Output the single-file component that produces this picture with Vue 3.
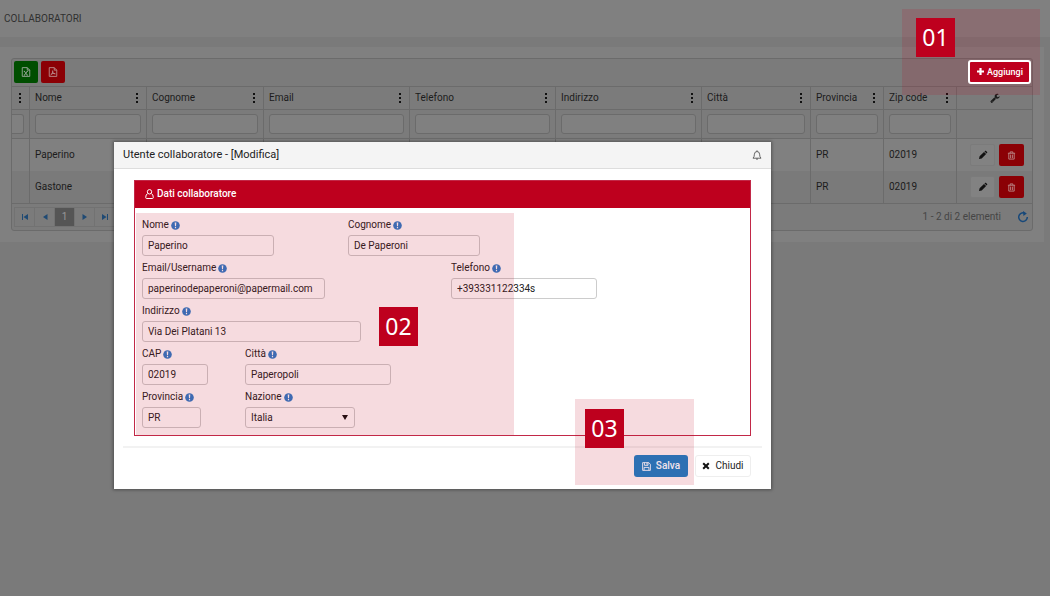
<script setup>
import { reactive } from 'vue'

const columns = [
  { key: 'nome', label: 'Nome', cls: 'w-name' },
  { key: 'cognome', label: 'Cognome', cls: 'w-name' },
  { key: 'email', label: 'Email', cls: 'w-wide' },
  { key: 'telefono', label: 'Telefono', cls: 'w-wide' },
  { key: 'indirizzo', label: 'Indirizzo', cls: 'w-wide' },
  { key: 'citta', label: 'Città', cls: 'w-city' },
  { key: 'provincia', label: 'Provincia', cls: 'w-short' },
  { key: 'zip', label: 'Zip code', cls: 'w-short' }
]
const rows = [
  { nome: 'Paperino', provincia: 'PR', zip: '02019' },
  { nome: 'Gastone', provincia: 'PR', zip: '02019' }
]
const fields = reactive([
  { id: 'nome', label: 'Nome', value: 'Paperino', col: 'c1', size: 's-name' },
  { id: 'cognome', label: 'Cognome', value: 'De Paperoni', col: 'c3', size: 's-name' },
  { id: 'email', label: 'Email/Username', value: 'paperinodepaperoni@papermail.com', col: 'c1', size: 's-email' },
  { id: 'telefono', label: 'Telefono', value: '+393331122334s', col: 'c4', size: 's-wide' },
  { id: 'indirizzo', label: 'Indirizzo', value: 'Via Dei Platani 13', col: 'c1 full', size: 's-address' },
  { id: 'cap', label: 'CAP', value: '02019', col: 'c1 one', size: 's-cap' },
  { id: 'citta', label: 'Città', value: 'Paperopoli', col: 'c2', size: 's-wide' },
  { id: 'provincia', label: 'Provincia', value: 'PR', col: 'c1 one', size: 's-prov' },
  { id: 'nazione', label: 'Nazione', value: 'Italia', col: 'c2', size: 's-country', select: true }
])
</script>

<template>
  <div class="page">
    <header class="top"><h1>COLLABORATORI</h1></header>
    <main class="panel">
      <section class="grid">
        <div class="toolbar">
          <button class="tool green" aria-label="Excel">
            <svg width="10" height="10" viewBox="0 0 16 16" fill="none" stroke="currentColor" stroke-width="1.4"><path d="M2 1h8l4 4v10H2zM10 1v4h4M5.500 7l4.500 6M10 7l-4.500 6M4.500 7h2M9 7h2M4.500 13h2M9 13h2" /></svg>
          </button>
          <button class="tool red" aria-label="PDF">
            <svg width="10" height="10" viewBox="0 0 16 16" fill="none" stroke="currentColor" stroke-width="1.4"><path d="M2 1h8l4 4v10H2zM10 1v4h4M4 13c2-1 4-4 3.500-7.500M7.500 7c.5 3 2 4 4.500 4M5 11.500c2-1 4-1.500 6-1" /></svg>
          </button>
          <button class="add">
            <svg width="9" height="9" viewBox="0 0 9 9" fill="currentColor"><path d="M3.400 1h2.200v2.400H8v2.200H5.600V8H3.400V5.600H1V3.400h2.400z" /></svg>
            Aggiungi
          </button>
        </div>
        <table>
          <thead>
            <tr class="heads">
              <th class="w-clip"><button class="dots" aria-label="Menu"><i></i><i></i><i></i></button></th>
              <th v-for="c in columns" :key="c.key" :class="c.cls">
                <div class="head"><span>{{ c.label }}</span><button class="dots" :aria-label="'Menu ' + c.label"><i></i><i></i><i></i></button></div>
              </th>
              <th class="w-tools">
                <svg width="10" height="10" viewBox="0 0 1792 1792" fill="currentColor"><path d="M448 1472q0-26-19-45t-45-19-45 19-19 45 19 45 45 19 45-19 19-45zm644-420l-682 682q-37 37-90 37-52 0-91-37l-106-108q-38-36-38-90 0-53 38-91l681-681q39 98 114.500 173.500t173.500 114.500zm634-435q0 39-23 106-47 134-164.500 217.500t-258.500 83.500q-185 0-316.500-131.500t-131.500-316.500 131.500-316.500 316.500-131.500q58 0 121.500 16.500t107.500 46.500q16 11 16 28t-16 28l-293 169v224l193 107q5-3 79-48.500t135.500-81 70.500-35.500q15 0 23.500 10t8.500 25z" /></svg>
              </th>
            </tr>
            <tr class="filters">
              <th class="clip"><input aria-label="Filtro" /></th>
              <th v-for="c in columns" :key="c.key"><input :aria-label="'Filtro ' + c.label" /></th>
              <th></th>
            </tr>
          </thead>
          <tbody>
            <tr v-for="(r, i) in rows" :key="i">
              <td></td>
              <td v-for="c in columns" :key="c.key">{{ r[c.key] }}</td>
              <td>
                <div class="actions">
                  <button class="edit" aria-label="Modifica">
                    <svg width="10" height="10" viewBox="0 0 10 10" fill="currentColor"><path d="M1 9l.6-2.700L6 1.900 8.100 4 3.700 8.400zM6.500 1.400l.7-.6q.5-.3.900.1L9.100 1.900q.4.4.1.900l-.6.700z" /></svg>
                  </button>
                  <button class="del" aria-label="Elimina">
                    <svg width="9" height="9" viewBox="0 0 10 10" fill="none" stroke="currentColor"><path d="M1 2.500h8M3.500 2.500v-1.500h3v1.500M2 2.500v6.500h6V2.500M4 4v4M6 4v4" /></svg>
                  </button>
                </div>
              </td>
            </tr>
          </tbody>
        </table>
        <footer class="pager">
          <nav class="pages">
            <button aria-label="Prima pagina"><svg width="8" height="8" viewBox="0 0 8 8" fill="currentColor"><path d="M1 1h1v6H1zM7 1v6L2.500 4z" /></svg></button>
            <button aria-label="Pagina precedente"><svg width="8" height="8" viewBox="0 0 8 8" fill="currentColor"><path d="M6.500 1v6L2 4z" /></svg></button>
            <button class="current">1</button>
            <button aria-label="Pagina successiva"><svg width="8" height="8" viewBox="0 0 8 8" fill="currentColor"><path d="M1.500 1v6L6 4z" /></svg></button>
            <button aria-label="Ultima pagina"><svg width="8" height="8" viewBox="0 0 8 8" fill="currentColor"><path d="M6 1h1v6H6zM1 1v6L5.500 4z" /></svg></button>
          </nav>
          <span class="count">1 - 2 di 2 elementi</span>
          <button class="refresh" aria-label="Aggiorna">
            <svg width="12" height="12" viewBox="0 0 12 12"><path d="M7.500 2.100A4.300 4.300 0 1 0 10.300 6" fill="none" stroke="currentColor" stroke-width="1.500" /><path d="M6 0L9.800 2.400 6.400 5z" fill="currentColor" /></svg>
          </button>
        </footer>
      </section>
      <div class="mark mark-1"><span class="num">01</span></div>
    </main>

    <div class="modal" role="dialog" aria-labelledby="dialog-title">
      <header class="modal-head">
        <h2 id="dialog-title">Utente collaboratore - [Modifica]</h2>
        <svg width="10" height="10" viewBox="0 0 10 10" fill="none" stroke="#555" stroke-width=".9"><path d="M1 8.200q1.400-1.400 1.400-4Q2.600 1.500 5 1.500t2.600 2.700q0 2.600 1.400 4zM5 .3v1.200M4 8.800q1 1 2 0" /></svg>
      </header>
      <section class="card">
        <h3>
          <svg width="9" height="10" viewBox="0 0 9 10" fill="none" stroke="currentColor"><circle cx="4.500" cy="2.800" r="2.200" /><path d="M2.700 4.500Q.7 5.500.7 8.500q0 1 1 1h5.600q1 0 1-1 0-3-2-4" /></svg>
          Dati collaboratore
        </h3>
        <form class="form" @submit.prevent>
          <div v-for="f in fields" :key="f.id" class="field" :class="f.col">
            <label :for="f.id">{{ f.label }}
              <svg width="9" height="9" viewBox="0 0 9 9"><circle cx="4.500" cy="4.500" r="4.300" fill="#2a7ccb" /><path d="M3.700 1.500h1.600L5 5.300H4zM3.900 6h1.200v1.300H3.900z" fill="#fff" /></svg>
            </label>
            <div v-if="f.select" class="select" :class="f.size">
              <select :id="f.id" v-model="f.value"><option>Italia</option></select>
              <svg width="6" height="5" viewBox="0 0 6 5"><path d="M0 0h6L3 5z" fill="#111" /></svg>
            </div>
            <input v-else :id="f.id" v-model="f.value" :class="f.size" />
          </div>
        </form>
        <div class="mark mark-2"><span class="num">02</span></div>
      </section>
      <footer class="modal-foot">
        <div class="mark mark-3"><span class="num">03</span></div>
        <button class="save">
          <svg width="9" height="9" viewBox="0 0 10 10" fill="none" stroke="currentColor"><path d="M.7.700h6.800l1.800 1.800v6.800H.7zM2.700.700v3h4v-3M2.300 9.300v-3.300h5.400v3.300M5.500 1v2" /></svg>
          Salva
        </button>
        <button class="close">
          <svg width="8" height="8" viewBox="0 0 8 8"><path d="M1.200 1.200l5.600 5.600M6.800 1.200L1.200 6.800" stroke="#111" stroke-width="2" /></svg>
          Chiudi
        </button>
      </footer>
    </div>
  </div>
</template>

<style>
body { margin: 0; background: #7a7a7a; }
</style>

<style scoped>
* { box-sizing: border-box; }
.page { position: relative; min-height: 100vh; background: #7a7a7a; color: #1c1c1c; font: 10px/12px Roboto, "Liberation Sans", sans-serif; }
h1, h2, h3 { margin: 0; font-weight: 400; }
button, input, select { font: inherit; color: inherit; margin: 0; padding: 0; }
button { border: 0; background: none; display: flex; align-items: center; justify-content: center; }
svg { display: block; flex: none; }
.top { height: 37px; padding: 0 4px; background: #808080; display: flex; align-items: center; }
.top h1 { font-size: 10px; color: #303030; }
.panel { position: relative; margin: 10px 6px 0 0; padding: 11px; background: #808080; }
.grid { border: 1px solid #6b6b6b; border-radius: 3px; background: #7b7b7b; }
.toolbar { height: 27px; display: flex; align-items: center; gap: 3px; padding: 0 1px 2px 2px; }
.tool { width: 24px; height: 22px; border-radius: 2px; color: #a0aaa0; }
.green { background: #004e00; }
.red { background: #8b0005; color: #bb9090; }
.add { position: relative; z-index: 3; margin-left: auto; width: 63px; height: 24px; gap: 2px; border: 2px solid #fff; border-radius: 3px; background: #be001e; color: #fff; font-weight: 500; font-size: 9px; }
table { width: 100%; table-layout: fixed; border-spacing: 0; border-top: 1px solid #6b6b6b; border-bottom: 1px solid #6b6b6b; }
th, td { border-left: 1px solid #6b6b6b; padding: 0 5px; font-weight: 400; text-align: left; }
th:first-child, td:first-child { border-left: 0; }
.w-clip { width: 17px; } .w-name { width: 117px; } .w-wide { width: 146px; } .w-city { width: 109px; } .w-short { width: 73px; } .w-tools { width: 76px; }
.heads th { height: 23px; border-bottom: 1px solid #6b6b6b; }
.w-tools svg { margin: 0 auto; }
.head { display: flex; justify-content: space-between; align-items: center; }
.dots { flex-direction: column; gap: 2px; width: 6px; height: 12px; }
.head .dots { width: 8px; }
.dots i { width: 2px; height: 2px; background: #111; }
.filters th { height: 29px; border-bottom: 1px solid #6b6b6b; }
.filters input { display: block; width: 100%; height: 20px; border: 1px solid #6b6b6b; border-radius: 3px; background: #808080; }
.filters .clip { padding-left: 0; overflow: hidden; }
.filters .clip input { border-left: 0; border-radius: 0 3px 3px 0; }
tbody td { height: 32px; background: #808080; }
tbody tr:nth-child(2) td { background: #7a7a7a; }
.actions { display: flex; justify-content: flex-end; gap: 4px; padding-right: 3px; }
.actions button { width: 25px; height: 22px; border-radius: 2px; }
.edit { background: #828282; border: 1px solid #7b7b7b; color: #111; }
.del { background: #8b0005; color: #b88; }
.pager { height: 26px; display: flex; align-items: center; padding: 0 3px 0 2px; }
.pages { display: flex; height: 20px; border: 1px solid #727272; }
.pages button { width: 20px; border-right: 1px solid #727272; color: #1f4a74; }
.pages .current { background: #555; color: #999; }
.count { margin-left: auto; margin-right: 16px; color: #454545; }
.refresh { color: #17487a; }

.mark { position: absolute; z-index: 2; background: rgba(192, 0, 31, .14); pointer-events: none; }
.num { position: absolute; width: 39px; height: 39px; background: #be001e; color: #fff; font: 23px/38px "Noto Sans", "Open Sans", sans-serif; text-align: center; }
.mark-1 { right: 4px; top: -38px; width: 138px; height: 86px; }
.mark-1 .num { left: 14px; top: 9px; }
.mark-2 { left: 1px; top: 32px; bottom: 0; width: 378px; }
.mark-2 .num { left: 243px; top: 94px; }
.mark-3 .num { left: 10px; top: 10px; }

.modal { position: absolute; left: 114px; right: 279px; top: 142px; z-index: 5; background: #fff; box-shadow: 0 0 3px 1px rgba(0, 0, 0, .35); color: #222; }
.modal-head { height: 27px; padding: 0 9px; display: flex; align-items: center; justify-content: space-between; background: #f4f4f4; border-bottom: 1px solid #ddd; }
.modal-head h2 { font-size: 11px; }
.card { position: relative; margin: 11px 20px 0; border: 1px solid #c22847; }
.card h3 { height: 27px; padding: 0 10px 1px; display: flex; align-items: center; gap: 3px; background: #be001e; color: #fff; font-size: 10px; font-weight: 500; }
.form { display: grid; grid-template-columns: repeat(5, 103px) 1fr; row-gap: 6px; padding: 11px 0 7px; }
.field { padding-left: 7px; min-width: 0; }
.c1 { grid-column: 1 / span 2; }
.c1.one { grid-column: 1; }
.c1.full { grid-column: 1 / -1; }
.c2 { grid-column: 2 / -1; }
.c3 { grid-column: 3 / -1; }
.c4 { grid-column: 4 / -1; }
.field label { display: flex; align-items: center; gap: 2px; height: 16px; padding-bottom: 4px; }
.field input, .field select { display: block; height: 21px; border: 1px solid #ccc; border-radius: 3px; background: #fff; padding: 0 5px; }
.s-name { width: 132px; } .s-email { width: 183px; } .s-wide { width: 146px; } .s-address { width: 219px; } .s-cap { width: 66px; } .s-prov { width: 59px; } .s-country { width: 110px; }
.select { position: relative; }
.field select { width: 100%; appearance: none; }
.select svg { position: absolute; right: 7px; top: 8px; pointer-events: none; }
.modal-foot { position: relative; display: flex; justify-content: flex-end; gap: 7px; margin: 10px 9px 0; padding: 7px 11px 0 0; border-top: 2px solid #f2f2f2; height: 43px; }
.mark-3 { right: 68px; bottom: 4px; width: 119px; height: 86px; z-index: 0; }
.modal-foot button { position: relative; height: 22px; border-radius: 3px; }
.save { width: 54px; gap: 5px; background: #2d70b3; color: #f4e4ec; font-weight: 500; }
.close { width: 56px; gap: 5px; background: #fff; border: 1px solid #eee; }
</style>
